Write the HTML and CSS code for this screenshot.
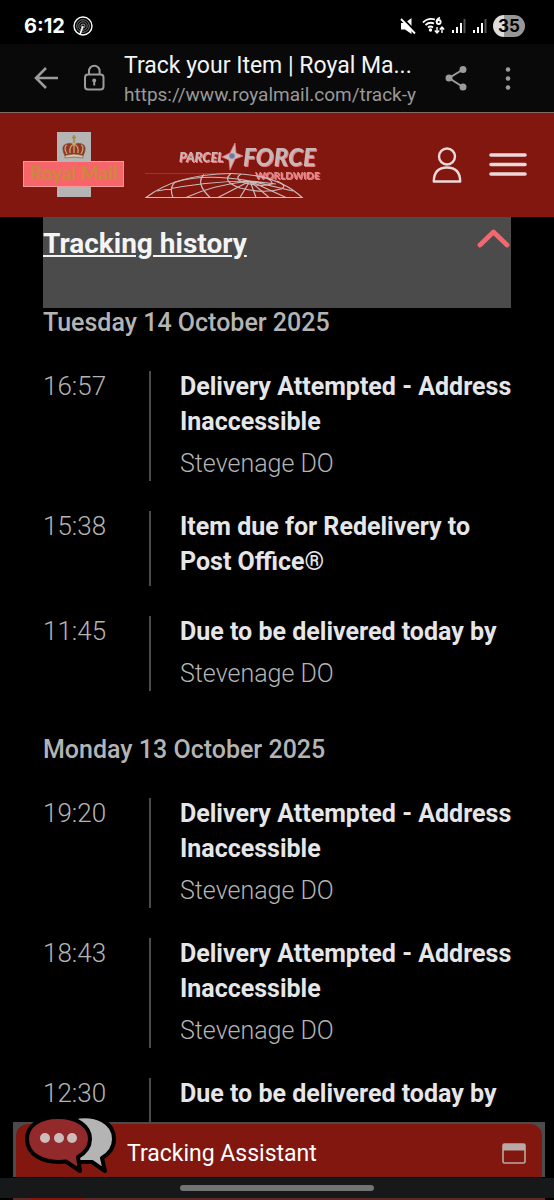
FILE: index.html
```html
<!DOCTYPE html>
<html lang="en">
<head>
<meta charset="utf-8">
<meta name="viewport" content="width=device-width, initial-scale=1">
<title>Track your Item | Royal Mail</title>
<link rel="stylesheet" href="styles.css">
</head>
<body>

<div class="status">
	<span class="clock">6:12</span>
	<svg width="20" height="20" viewBox="0 0 20 20" fill="none" stroke="#fff">
		<circle cx="10" cy="10" r="9" stroke-width="1.4"/>
		<circle cx="10" cy="10" r="6.3" stroke="#999" stroke-width="0.8"/>
		<circle cx="10" cy="10" r="4.2" stroke="#999" stroke-width="0.8"/>
		<circle cx="10" cy="10" r="2" stroke="#ccc" stroke-width="0.8"/>
		<path d="M10 10L7 18.500" stroke-width="1.6"/>
	</svg>
	<div class="statusIcons">
		<svg width="16" height="18" viewBox="0 0 16 18">
			<path d="M1 6h4l6.500-5v16L5 12.500H1z" fill="#fff"/>
			<path d="M2.500 1l13.500 14" stroke="#000" stroke-width="2"/>
			<path d="M1 2l14 14.500" stroke="#fff" stroke-width="1.800"/>
		</svg>
		<svg width="23" height="20" viewBox="0 0 23 20" fill="none" stroke="#fff" stroke-width="1.800">
			<path d="M1 6.500Q6 1.500 13 3.500M3.500 9Q7.500 5.500 12 7.500M6 11.500Q8.500 9.500 11 11.500"/>
			<circle cx="8.500" cy="14" r="0.800"/>
			<path d="M18 1.500Q14.500 3 14.500 6"/>
			<circle cx="16.700" cy="6" r="2"/>
			<path d="M15 11v6M12.800 14.500L15 17l2.200-2.500M20 17v-6M17.800 13.500L20 11l2.200 2.500" stroke-width="1.400"/>
		</svg>
		<svg width="15" height="16" viewBox="0 0 15 16" fill="#fff">
			<path d="M1 12h2v3H1zM5 9h2v6H5zM9 5h2v10H9z"/>
			<path d="M12.500 1h2v14h-2z" fill="#555"/>
		</svg>
		<svg width="15" height="16" viewBox="0 0 15 16" fill="#fff">
			<path d="M1 12h2v3H1zM5 9h2v6H5zM9 5h2v10H9z"/>
			<path d="M12.500 1h2v14h-2z" fill="#555"/>
		</svg>
		<span class="battery">35</span>
	</div>
</div>

<div class="browserBar">
	<button class="iconButton" type="button" aria-label="Back">
		<svg width="26" height="24" viewBox="0 0 26 24" fill="none" stroke="#9b9b9b" stroke-width="2.600">
			<path d="M13 2L3 12l10 10M3 12h22"/>
		</svg>
	</button>
	<button class="iconButton" type="button" aria-label="Site information">
		<svg width="22" height="28" viewBox="0 0 22 28" fill="none" stroke="#9b9b9b" stroke-width="2">
			<rect x="2" y="10.500" width="18.500" height="15" rx="3"/>
			<path d="M6 10.500V7a5.300 5.300 0 0 1 10.600 0v3.500"/>
			<path d="M11.200 16v5.500"/>
			<circle cx="11.200" cy="16.500" r="1"/>
		</svg>
	</button>
	<div class="address">
		<div class="pageTitle">Track your Item | Royal Ma...</div>
		<div class="pageUrl">https://www.royalmail.com/track-y</div>
	</div>
	<button class="iconButton" type="button" aria-label="Share">
		<svg width="24" height="26" viewBox="0 0 24 26" fill="#9b9b9b" stroke="#9b9b9b" stroke-width="2">
			<path d="M18 4.500L4 13l14 9" fill="none"/>
			<circle cx="18" cy="4.500" r="2.500"/>
			<circle cx="4" cy="13" r="2.500"/>
			<circle cx="18" cy="22" r="2.500"/>
		</svg>
	</button>
	<button class="iconButton" type="button" aria-label="More options">
		<svg width="6" height="26" viewBox="0 0 6 26" fill="#9b9b9b">
			<circle cx="3" cy="4.500" r="2.300"/>
			<circle cx="3" cy="13.500" r="2.300"/>
			<circle cx="3" cy="22.500" r="2.300"/>
		</svg>
	</button>
</div>

<header class="siteHeader">
	<a class="royalMail" href="#" aria-label="Royal Mail">
		<svg width="102" height="66" viewBox="0 0 102 66">
			<rect x="34" y="0" width="34" height="65" fill="#b5b5b5"/>
			<g stroke="#77503a" stroke-width="0.600">
				<path d="M42 24Q37 14 43 12Q48 10 51 13Q54 10 59 12Q65 14 60 24z" fill="#93352c"/>
				<path d="M42 23.500Q51 20.500 60 23.500V26Q51 24 42 26z" fill="#d9c9a8"/>
				<path d="M51 3v8M49 5.500h4" stroke="#a8893a" stroke-width="1.600"/>
				<path d="M44 22Q40 15 44 13M51 21v-9M58 22Q62 15 58 13M47 21Q46 14 51 12Q56 14 55 21" fill="none" stroke="#c4aa62" stroke-width="1.300"/>
			</g>
			<rect x="0.500" y="29.500" width="100" height="25" fill="#f7656b" stroke="#f29a9b"/>
			<text class="royalMailText" x="51" y="48" text-anchor="middle">Royal Mail</text>
		</svg>
	</a>
	<a class="parcelForce" href="#" aria-label="Parcelforce Worldwide">
		<svg width="176" height="72" viewBox="0 -14 176 72">
			<g class="parcelText">
				<text x="34" y="19" font-size="13">PARCEL</text>
				<text x="98" y="23" font-size="24">FORCE</text>
				<text class="worldwide" x="110" y="36" font-size="10">WORLDWIDE</text>
			</g>
			<path d="M90 0l1 10 7 3-8 3-5 11-1-10-7-3 8-4z" fill="#c9bcbb" stroke="#f2777c" stroke-width="0.800"/>
			<circle cx="87" cy="13" r="2.800" fill="#7778a8"/>
			<path d="M-1 30.500h82" stroke="#a5504a" stroke-width="0.600"/>
			<g fill="none" stroke="#c9bcbb" stroke-width="1.200">
				<path d="M1 54.500H157Q132 31 86 30.500Q32 31 1 54.500z"/>
				<path d="M105 38Q60 30 30 39Q24 45 28 54.500M105 38Q62 38 12 48M105 38Q68 42 41 54.500M105 38L73 54.500M105 38l-10 16.500M105 38l6 16.500M105 38l19 16.500M105 38l36 16.500M105 38l43 10M105 38l26 3"/>
				<path d="M59 31.500Q50 40 65 54.500M86 30.500Q76 38 95 45Q118 51 136 46Q143 43 132 38M96 31Q88 36 100 40Q116 44 127 41Q128 37 118 34"/>
			</g>
		</svg>
	</a>
	<div class="headerActions">
		<button class="iconButton" type="button" aria-label="My account">
			<svg width="30" height="38" viewBox="0 0 30 38" fill="none" stroke="#ecd9d8" stroke-width="2.400">
				<circle cx="15" cy="10.500" r="8"/>
				<path d="M1.800 35.500Q2 21.500 15 21.500Q28 21.500 28.200 35.500z" stroke-linejoin="round"/>
			</svg>
		</button>
		<button class="iconButton" type="button" aria-label="Menu">
			<svg width="40" height="26" viewBox="0 0 40 26" stroke="#ecd9d8" stroke-width="3.600" stroke-linecap="round">
				<path d="M3 3h34M3 12.500h34M3 22h34"/>
			</svg>
		</button>
	</div>
</header>

<main class="tracking">
	<button class="historyToggle" type="button" aria-expanded="true">
		<span class="historyTitle">Tracking history</span>
		<svg width="34" height="22" viewBox="0 0 34 22" fill="none" stroke="#f4676c" stroke-width="4.800" stroke-linecap="round" stroke-linejoin="round">
			<path d="M3 17L16.500 4L30 17"/>
		</svg>
	</button>

	<section class="day">
		<h2>Tuesday 14 October 2025</h2>
		<ol class="events">
			<li>
				<time>16:57</time>
				<div class="details">
					<h3>Delivery Attempted - Address Inaccessible</h3>
					<p>Stevenage DO</p>
				</div>
			</li>
			<li>
				<time>15:38</time>
				<div class="details">
					<h3>Item due for Redelivery to Post Office®</h3>
				</div>
			</li>
			<li>
				<time>11:45</time>
				<div class="details">
					<h3>Due to be delivered today by</h3>
					<p>Stevenage DO</p>
				</div>
			</li>
		</ol>
	</section>

	<section class="day">
		<h2>Monday 13 October 2025</h2>
		<ol class="events">
			<li>
				<time>19:20</time>
				<div class="details">
					<h3>Delivery Attempted - Address Inaccessible</h3>
					<p>Stevenage DO</p>
				</div>
			</li>
			<li>
				<time>18:43</time>
				<div class="details">
					<h3>Delivery Attempted - Address Inaccessible</h3>
					<p>Stevenage DO</p>
				</div>
			</li>
			<li>
				<time>12:30</time>
				<div class="details">
					<h3>Due to be delivered today by</h3>
				</div>
			</li>
		</ol>
	</section>
</main>

<div class="assistant">
	<button class="assistantBar" type="button">
		<span>Tracking Assistant</span>
		<svg width="24" height="22" viewBox="0 0 24 22">
			<rect x="1" y="1" width="22" height="19" rx="1.500" fill="none" stroke="#b9a9a6" stroke-width="1.600"/>
			<path d="M1 1h22v6.500H1z" fill="#b9a9a6"/>
		</svg>
	</button>
	<svg class="bubbles" width="94" height="64" viewBox="0 0 94 64" stroke="#000" stroke-width="4" stroke-linejoin="round">
		<path d="M50 3.500C73 -1 90 9 90 25Q90 37 78 44L81 57L68 48H50z" fill="#b4b4b4"/>
		<path d="M34 3C53 3 66 12 66 25Q66 36 54 43L56 57L42 47.500C18 50 3 40 3 25C3 12 15 3 34 3z" fill="#922a2c"/>
		<g fill="#cdbcbc" stroke="none">
			<circle cx="21" cy="24" r="5"/>
			<circle cx="35" cy="24" r="5"/>
			<circle cx="48" cy="24" r="5"/>
		</g>
	</svg>
</div>

<div class="gestureBar"><span></span></div>
<div class="pageEdge"><span></span></div>

</body>
</html>
```

FILE: styles.css
```css
*{
	box-sizing: border-box;
}
body{
	display: flex;
	flex-direction: column;
	height: 100vh;
	margin: 0;
	overflow: hidden;
	background: #000;
	color: #b4b4b4;
	font-family: Roboto, sans-serif;
}
svg{
	display: block;
	flex-shrink: 0;
}
h2, h3, p, ol{
	margin: 0;
	padding: 0;
}
button{
	padding: 0;
	border: 0;
	background: none;
	color: inherit;
	font-family: inherit;
}

/* phone status bar */
.status{
	display: flex;
	flex-shrink: 0;
	align-items: center;
	gap: 8px;
	height: 44px;
	padding: 8px 29px 0 24px;
	color: #fff;
}
.clock{
	font: bold 20px Inter, sans-serif;
}
.statusIcons{
	display: flex;
	align-items: center;
	gap: 6px;
	margin-left: auto;
}
.battery{
	width: 32px;
	border-radius: 11px;
	background: linear-gradient(to right, #dedede 35%, #979797 35%);
	color: #000;
	font: bold 17px/22px Inter, sans-serif;
	text-align: center;
}

/* browser toolbar */
.browserBar{
	display: flex;
	flex-shrink: 0;
	align-items: center;
	height: 68px;
	padding: 0 43px 0 33px;
	background: #090909;
}
.iconButton + .iconButton{
	margin-left: 24px;
}
.address{
	flex: 1;
	min-width: 0;
	margin: 0 24px 0 19px;
	padding-top: 2px;
	overflow: hidden;
	white-space: nowrap;
}
.pageTitle{
	color: #f4f4f4;
	font-size: 23px;
	line-height: 32px;
}
.pageUrl{
	color: #999;
	font-size: 19px;
	line-height: 26px;
}
.address ~ .iconButton + .iconButton{
	margin-left: 36px;
}

/* site header */
.siteHeader{
	display: flex;
	flex-shrink: 0;
	align-items: center;
	height: 105px;
	padding: 0 26px 0 23px;
	border-top: 1px solid #806a66;
	background: #82170f;
}
.royalMailText{
	fill: #c98a3c;
	font: bold 19px Lato, sans-serif;
}
.parcelForce{
	margin-left: 20px;
}
.parcelText{
	fill: #c4b8b7;
	filter: drop-shadow(1px 1px 0 #f2777c);
	font-family: Lato, sans-serif;
	font-weight: 900;
	font-style: italic;
}
.worldwide{
	fill: #e08a8c;
	font-style: normal;
}
.headerActions{
	display: flex;
	align-items: center;
	margin-left: auto;
}
.headerActions .iconButton + .iconButton{
	margin-left: 26px;
}

/* tracking history */
.tracking{
	flex: 1;
	min-height: 0;
	padding: 0 43px;
	overflow: hidden;
}
.historyToggle{
	display: flex;
	justify-content: space-between;
	align-items: flex-start;
	width: 100%;
	height: 91px;
	padding-top: 11px;
	background: #4b4b4b;
}
.historyTitle{
	color: #f4f4f4;
	font-size: 28px;
	font-weight: bold;
	line-height: 32px;
	text-decoration: underline;
}
.day + .day{
	margin-top: 44px;
}
.day h2{
	margin-bottom: 33px;
	font-size: 25px;
	font-weight: 500;
	line-height: 30px;
}
.events{
	display: flex;
	flex-direction: column;
	gap: 30px;
	margin-right: -8px;
	list-style: none;
}
.events li{
	display: flex;
}
.events time{
	width: 106px;
	font-size: 26px;
	font-weight: 300;
	line-height: 30px;
}
.details{
	flex: 1;
	min-height: 75px;
	padding-left: 29px;
	border-left: 2px solid #4b4b4b;
}
.details h3{
	margin: -2px 0 7px;
	color: #e6e6e9;
	font-size: 25px;
	font-weight: bold;
	line-height: 35px;
}
.details p{
	font-size: 25px;
	font-weight: 300;
	line-height: 35px;
}

/* chat bar */
.assistant{
	position: relative;
	flex-shrink: 0;
	margin: 0 9px 1px 13px;
	padding: 2px 3px 0;
	background: #4b4b4b;
}
.assistantBar{
	display: flex;
	justify-content: space-between;
	align-items: center;
	width: 100%;
	height: 53px;
	padding: 6px 16px 0 111px;
	border-radius: 12px 12px 0 0;
	background: #82170f;
	color: #fff;
	font-size: 23px;
}
.bubbles{
	position: absolute;
	left: 11px;
	top: -8px;
}
.gestureBar{
	display: flex;
	flex-shrink: 0;
	justify-content: center;
	align-items: center;
	height: 20px;
	background: #17181a;
}
.gestureBar span{
	width: 35%;
	height: 6px;
	border-radius: 3px;
	background: #737373;
}
.pageEdge{
	flex-shrink: 0;
	height: 2px;
	margin: 0 9px 0 13px;
	background: #5b2a26;
}
.pageEdge span{
	display: block;
	width: 54px;
	height: 2px;
	margin-left: 17px;
	background: #82170f;
}
```
